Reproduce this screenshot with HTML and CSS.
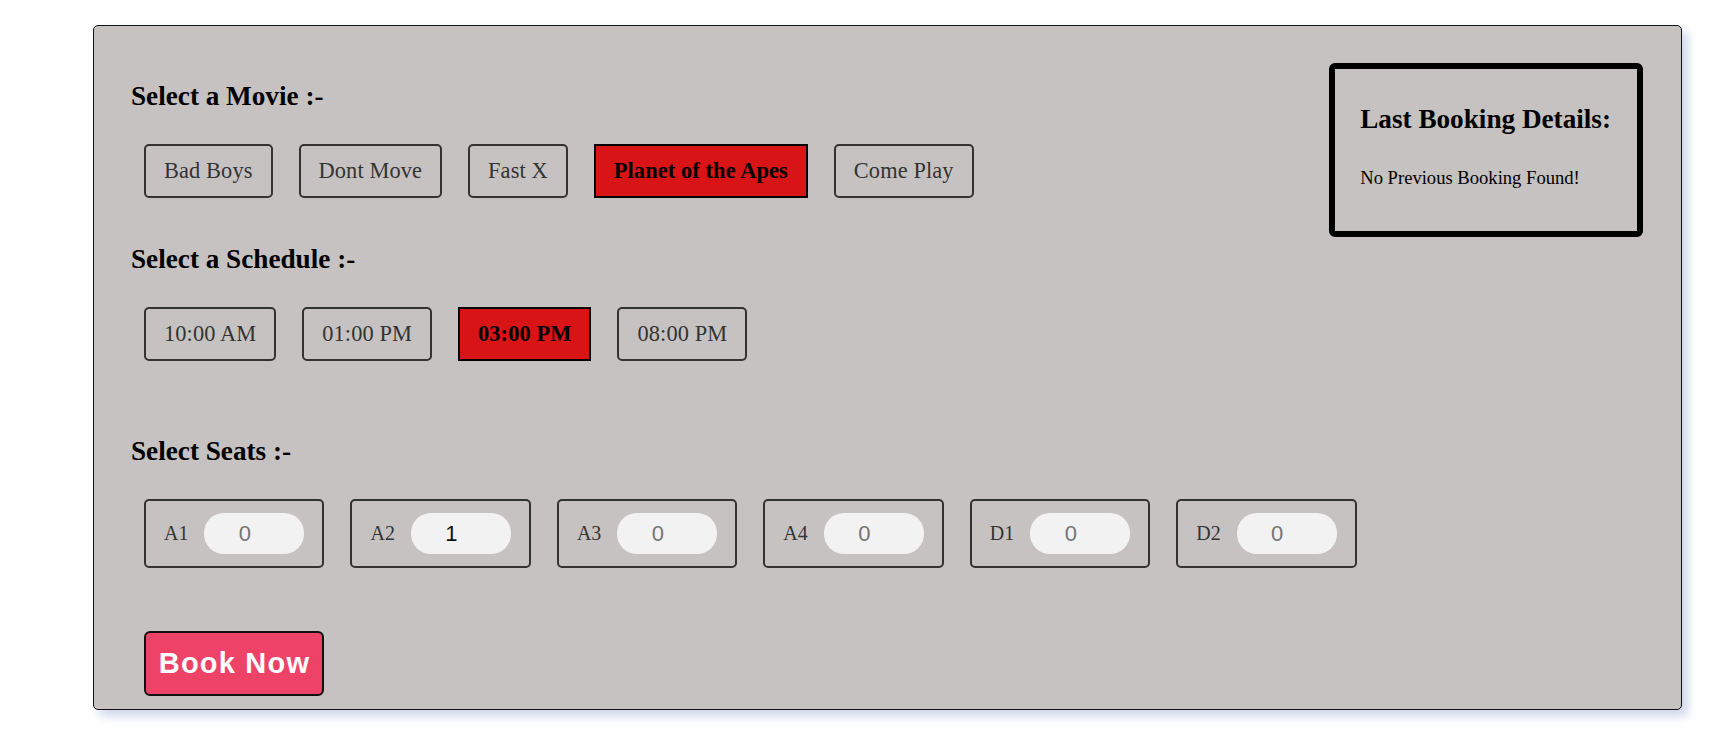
FILE: index.html
```html
<!DOCTYPE html>
<html lang="en">
<head>
<meta charset="utf-8">
<title>Book My Show</title>
<link rel="stylesheet" href="styles.css">
</head>
<body>
<div class="container">
  <div class="booking-form">
    <h2 class="section-title first">Select a Movie :-</h2>
    <div class="option-row">
      <button class="option">Bad Boys</button>
      <button class="option">Dont Move</button>
      <button class="option">Fast X</button>
      <button class="option selected">Planet of the Apes</button>
      <button class="option">Come Play</button>
    </div>

    <h2 class="section-title schedule">Select a Schedule :-</h2>
    <div class="option-row">
      <button class="option">10:00 AM</button>
      <button class="option">01:00 PM</button>
      <button class="option selected">03:00 PM</button>
      <button class="option">08:00 PM</button>
    </div>

    <h2 class="section-title seats">Select Seats :-</h2>
    <div class="option-row">
      <div class="seat"><label class="seat-label" for="a1">A1</label><input class="seat-input" id="a1" type="text" placeholder="0"></div>
      <div class="seat"><label class="seat-label" for="a2">A2</label><input class="seat-input" id="a2" type="text" value="1"></div>
      <div class="seat"><label class="seat-label" for="a3">A3</label><input class="seat-input" id="a3" type="text" placeholder="0"></div>
      <div class="seat"><label class="seat-label" for="a4">A4</label><input class="seat-input" id="a4" type="text" placeholder="0"></div>
      <div class="seat"><label class="seat-label" for="d1">D1</label><input class="seat-input" id="d1" type="text" placeholder="0"></div>
      <div class="seat"><label class="seat-label" for="d2">D2</label><input class="seat-input" id="d2" type="text" placeholder="0"></div>
    </div>

    <button class="book-btn">Book Now</button>
  </div>

  <div class="last-booking">
    <h2 class="last-title">Last Booking Details:</h2>
    <p class="last-text">No Previous Booking Found!</p>
  </div>
</div>
</body>
</html>
```

FILE: styles.css
```css
html, body {
  margin: 0;
  padding: 0;
  background: #ffffff;
}

body {
  font-family: "Liberation Serif", "Times New Roman", serif;
  color: #000;
  padding: 25px 0 30px 93px;
}

.container {
  width: 1589px;
  box-sizing: border-box;
  background: #c6c2c1;
  border: 1px solid #111;
  border-radius: 5px;
  box-shadow: 6px 6px 10px rgba(170, 182, 222, 0.55);
  padding: 37px 38px 13px 37px;
  display: flex;
  justify-content: space-between;
  align-items: flex-start;
}

.booking-form {
  flex: 1;
  min-width: 0;
  display: flex;
  flex-direction: column;
  align-items: flex-start;
}

.section-title {
  font-size: 27.2px;
  font-weight: bold;
  margin: 0 0 32px 0;
  white-space: nowrap;
}

.section-title.first { margin-top: 18px; }
.section-title.schedule { margin-top: 46px; }
.section-title.seats { margin-top: 75px; }

.option-row {
  display: flex;
  gap: 26px;
  margin-left: 13px;
}

.option {
  font-family: "Liberation Serif", "Times New Roman", serif;
  font-size: 22.4px;
  letter-spacing: 0.1px;
  line-height: normal;
  color: #333;
  background: transparent;
  border: 2px solid #333;
  border-radius: 5px;
  padding: 12px 18px;
  margin: 0;
  cursor: pointer;
  flex-shrink: 0;
}

.option.selected {
  background: #d81416;
  border-color: #000;
  border-radius: 0;
  color: #000;
  font-weight: bold;
}

.seat {
  flex-shrink: 0;
  display: flex;
  align-items: center;
  border: 2px solid #333;
  border-radius: 5px;
  padding: 12px 18px;
}

.seat-label {
  font-size: 20px;
  color: #333;
  margin-right: 16px;
}

.seat-input {
  width: 100px;
  height: 41px;
  box-sizing: border-box;
  border: none;
  outline: none;
  border-radius: 20px;
  background: #f2f2f2;
  font-family: "Liberation Sans", Arial, sans-serif;
  font-size: 22px;
  color: #111;
  text-align: center;
  padding: 0 19px 0 0;
  margin: 0;
}

.seat-input::placeholder {
  color: #757575;
  opacity: 1;
}

.book-btn {
  margin: 63px 0 0 13px;
  width: 180px;
  height: 65px;
  box-sizing: border-box;
  background: #ee4266;
  color: #fff;
  font-family: "Liberation Sans", Arial, sans-serif;
  font-weight: bold;
  font-size: 29px;
  letter-spacing: 1.2px;
  border: 2px solid #111;
  border-radius: 6px;
  padding: 0 0 0 1px;
  cursor: pointer;
}

.last-booking {
  flex-shrink: 0;
  border: 6px solid #000;
  border-radius: 6px;
  padding: 35px 26px 42px 25px;
}

.last-title {
  font-size: 27.2px;
  font-weight: bold;
  margin: 0 0 32px 0;
  white-space: nowrap;
}

.last-text {
  font-size: 18.6px;
  margin: 0;
  white-space: nowrap;
}
```
